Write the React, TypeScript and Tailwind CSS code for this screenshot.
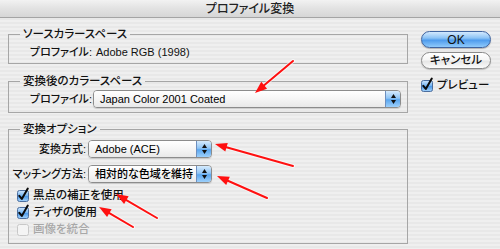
import React from "react";

const font = "font-['Liberation_Sans','Noto_Sans_CJK_JP',sans-serif] [font-feature-settings:'palt']";

function Popup({ w, text }: { w: string; text: string }) {
  return (
    <div className={`flex h-[18px] shrink-0 ${w} overflow-hidden rounded-[4px] border border-[#8c8c8c] shadow-[0_1px_1px_rgba(0,0,0,0.15)]`}>
      <div className="flex flex-1 items-center whitespace-nowrap bg-[linear-gradient(180deg,#ffffff_0%,#f4f4f4_55%,#e9e9e9_100%)] pl-[6px] text-[11px] leading-none text-black">
        {text}
      </div>
      <div className="flex w-[15px] flex-col items-center justify-center gap-[2px] border-l border-[#6d8fbf] bg-[linear-gradient(180deg,#d6ebfd_0%,#8fc4f5_45%,#5aa6ef_55%,#9dd0fb_100%)]">
        <svg width="5" height="4" viewBox="0 0 5 4"><path d="M2.5 0L5 4H0z" fill="#111" /></svg>
        <svg width="5" height="4" viewBox="0 0 5 4"><path d="M0 0H5L2.5 4z" fill="#111" /></svg>
      </div>
    </div>
  );
}

function Check({ on = true, disabled = false }: { on?: boolean; disabled?: boolean }) {
  if (disabled) {
    return (
      <svg width="12" height="12" viewBox="0 0 12 12" className="shrink-0">
        <rect x="0.5" y="0.5" width="11" height="11" rx="2" fill="#f4f4f4" stroke="#c8c8c8" />
      </svg>
    );
  }
  return (
    <svg width="12" height="12" viewBox="0 0 12 12" className="shrink-0 overflow-visible">
      <defs>
        <linearGradient id="cb" x1="0" y1="0" x2="0" y2="1">
          <stop offset="0" stopColor="#cfe6fd" />
          <stop offset="0.45" stopColor="#7ab8f3" />
          <stop offset="0.55" stopColor="#4f9bea" />
          <stop offset="1" stopColor="#a6d4fb" />
        </linearGradient>
      </defs>
      <rect x="0.5" y="0.5" width="11" height="11" rx="2" fill="url(#cb)" stroke="#4c6e9e" />
      {on && <path d="M2.3 5.8L4.8 8.9L10.8 -1.5" fill="none" stroke="#0a0a0a" strokeWidth="2" strokeLinecap="round" strokeLinejoin="round" />}
    </svg>
  );
}

function Arrow({ x1, y1, x2, y2 }: { x1: number; y1: number; x2: number; y2: number }) {
  const dx = x2 - x1;
  const dy = y2 - y1;
  const len = Math.hypot(dx, dy);
  const ux = dx / len;
  const uy = dy / len;
  const hl = 12;
  const hw = 4.5;
  const bx = x2 - ux * hl;
  const by = y2 - uy * hl;
  const p = `${x2},${y2} ${bx - uy * hw},${by + ux * hw} ${bx + uy * hw},${by - ux * hw}`;
  return (
    <g>
      <line x1={x1} y1={y1} x2={bx + ux * 2} y2={by + uy * 2} stroke="#ffffff" strokeWidth="4" strokeLinecap="round" opacity="0.6" />
      <line x1={x1} y1={y1} x2={bx + ux * 2} y2={by + uy * 2} stroke="#ff1010" strokeWidth="2" strokeLinecap="round" />
      <polygon points={p} fill="#ff1010" />
    </g>
  );
}

export default function App() {
  return (
    <div className={`relative flex h-[249px] w-[500px] flex-col overflow-hidden bg-[repeating-linear-gradient(180deg,#efefef_0px,#efefef_2px,#e8e8e8_2px,#e8e8e8_4px)] text-[#111] ${font}`}>
      <div className="flex h-[18px] shrink-0 items-center justify-center border-b border-[#a4a4a4] bg-[linear-gradient(180deg,#f2f2f2_0%,#e2e2e2_50%,#d6d6d6_100%)] text-[12px] font-medium leading-none text-[#222]">
        プロファイル変換
      </div>
      <div className="flex flex-1">
        <div className="ml-[8px] mt-[8px] flex w-[400px] flex-col font-medium">
          <fieldset className="border border-[#a6a6a6] pb-[3px]">
            <legend className="ml-[11px] px-[3px] text-[11.5px] leading-[16px]">ソースカラースペース</legend>
            <div className="ml-[21px] mt-[2px] flex h-[16px] items-center whitespace-nowrap text-[11px] leading-none">
              <span>プロファイル:</span>
              <span className="ml-[4px]">Adobe RGB (1998)</span>
            </div>
          </fieldset>
          <fieldset className="mt-[9px] border border-[#a6a6a6] pb-[4px]">
            <legend className="ml-[11px] px-[3px] text-[11.5px] leading-[16px]">変換後のカラースペース</legend>
            <div className="ml-[21px] mt-[1px] flex items-center whitespace-nowrap text-[11px] leading-none">
              <span>プロファイル:</span>
              <div className="ml-[1px]">
                <Popup w="w-[308px]" text="Japan Color 2001 Coated" />
              </div>
            </div>
          </fieldset>
          <fieldset className="mt-[8px] border border-[#a6a6a6] pb-[4px]">
            <legend className="ml-[11px] px-[3px] text-[11.5px] leading-[16px]">変換オプション</legend>
            <div className="mt-[3px] flex flex-col gap-[7px] whitespace-nowrap text-[11px] leading-none">
              <div className="flex items-center">
                <span className="w-[79px] shrink-0 pr-[2px] text-right">変換方式:</span>
                <Popup w="w-[124px]" text="Adobe (ACE)" />
              </div>
              <div className="flex items-center">
                <span className="w-[79px] shrink-0 pr-[2px] text-right">マッチング方法:</span>
                <Popup w="w-[124px]" text="相対的な色域を維持" />
              </div>
            </div>
            <div className="ml-[8px] mt-[4px] flex flex-col whitespace-nowrap text-[11.5px] leading-none">
              <div className="flex h-[17px] items-center gap-[4px]">
                <Check />
                <span>黒点の補正を使用</span>
              </div>
              <div className="flex h-[17px] items-center gap-[4px]">
                <Check />
                <span>ディザの使用</span>
              </div>
              <div className="flex h-[18px] items-center gap-[4px] text-[#a8a8a8]">
                <Check disabled />
                <span>画像を統合</span>
              </div>
            </div>
          </fieldset>
        </div>
        <div className="ml-[13px] mt-[13px] flex w-[70px] flex-col font-medium">
          <div className="flex h-[17px] items-center justify-center rounded-full border border-[#3f64a0] bg-[linear-gradient(180deg,#d3e9fe_0%,#8cc3f5_40%,#4f9ced_55%,#8fcafb_100%)] text-[12px] leading-none shadow-[0_1px_1px_rgba(0,0,0,0.25)]">
            OK
          </div>
          <div className="mt-[4px] flex h-[17px] items-center justify-center rounded-full border border-[#8a8a8a] bg-[linear-gradient(180deg,#ffffff_0%,#f6f6f6_45%,#e6e6e6_55%,#fbfbfb_100%)] text-[11.5px] leading-none shadow-[0_1px_1px_rgba(0,0,0,0.2)]">
            キャンセル
          </div>
          <div className="mt-[11px] flex items-center gap-[4px] text-[11.5px] leading-none">
            <Check />
            <span>プレビュー</span>
          </div>
        </div>
      </div>
      <svg className="pointer-events-none absolute left-0 top-0" width="500" height="249">
        <Arrow x1={293} y1={61} x2={255} y2={93} />
        <Arrow x1={293} y1={166} x2={215} y2={144} />
        <Arrow x1={267} y1={198} x2={217} y2={176} />
        <Arrow x1={157} y1={218} x2={116} y2={194} />
        <Arrow x1={133} y1={227} x2={99} y2={207} />
      </svg>
    </div>
  );
}
